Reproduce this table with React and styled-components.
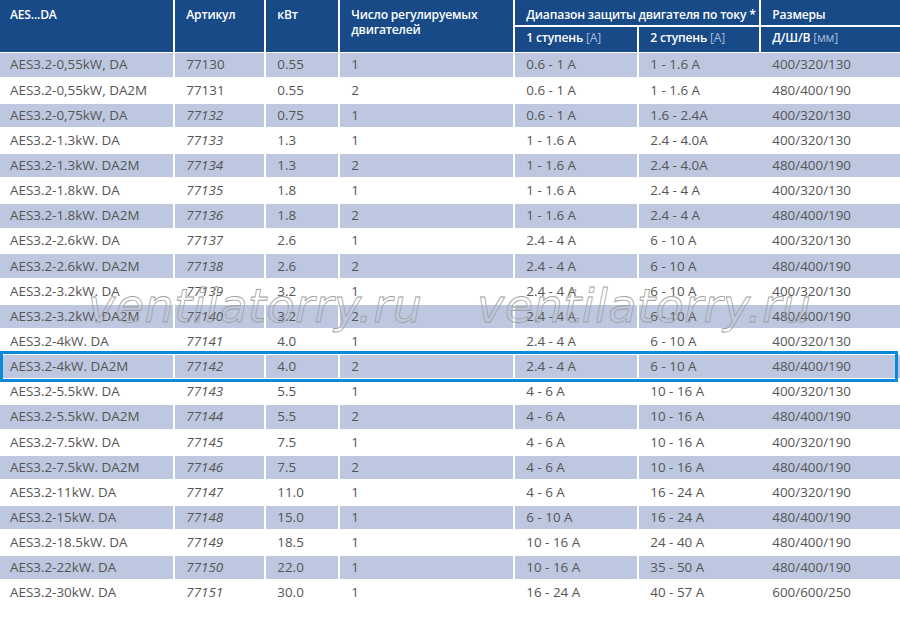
import React from 'react';
import styled, { createGlobalStyle } from 'styled-components';

const rows = [
  ['AES3.2-0,55kW, DA', '77130', '0.55', '1', '0.6 - 1 A', '1 - 1.6 A', '400/320/130'],
  ['AES3.2-0,55kW, DA2M', '77131', '0.55', '2', '0.6 - 1 A', '1 - 1.6 A', '480/400/190'],
  ['AES3.2-0,75kW, DA', '77132', '0.75', '1', '0.6 - 1 A', '1.6 - 2.4A', '400/320/130'],
  ['AES3.2-1.3kW. DA', '77133', '1.3', '1', '1 - 1.6 A', '2.4 - 4.0A', '400/320/130'],
  ['AES3.2-1.3kW. DA2M', '77134', '1.3', '2', '1 - 1.6 A', '2.4 - 4.0A', '480/400/190'],
  ['AES3.2-1.8kW. DA', '77135', '1.8', '1', '1 - 1.6 A', '2.4 - 4 A', '400/320/130'],
  ['AES3.2-1.8kW. DA2M', '77136', '1.8', '2', '1 - 1.6 A', '2.4 - 4 A', '480/400/190'],
  ['AES3.2-2.6kW. DA', '77137', '2.6', '1', '2.4 - 4 A', '6 - 10 A', '400/320/130'],
  ['AES3.2-2.6kW. DA2M', '77138', '2.6', '2', '2.4 - 4 A', '6 - 10 A', '480/400/190'],
  ['AES3.2-3.2kW. DA', '77139', '3.2', '1', '2.4 - 4 A', '6 - 10 A', '400/320/130'],
  ['AES3.2-3.2kW. DA2M', '77140', '3.2', '2', '2.4 - 4 A', '6 - 10 A', '480/400/190'],
  ['AES3.2-4kW. DA', '77141', '4.0', '1', '2.4 - 4 A', '6 - 10 A', '400/320/130'],
  ['AES3.2-4kW. DA2M', '77142', '4.0', '2', '2.4 - 4 A', '6 - 10 A', '480/400/190'],
  ['AES3.2-5.5kW. DA', '77143', '5.5', '1', '4 - 6 A', '10 - 16 A', '400/320/130'],
  ['AES3.2-5.5kW. DA2M', '77144', '5.5', '2', '4 - 6 A', '10 - 16 A', '480/400/190'],
  ['AES3.2-7.5kW. DA', '77145', '7.5', '1', '4 - 6 A', '10 - 16 A', '400/320/190'],
  ['AES3.2-7.5kW. DA2M', '77146', '7.5', '2', '4 - 6 A', '10 - 16 A', '480/400/190'],
  ['AES3.2-11kW. DA', '77147', '11.0', '1', '4 - 6 A', '16 - 24 A', '400/320/190'],
  ['AES3.2-15kW. DA', '77148', '15.0', '1', '6 - 10 A', '16 - 24 A', '480/400/190'],
  ['AES3.2-18.5kW. DA', '77149', '18.5', '1', '10 - 16 A', '24 - 40 A', '480/400/190'],
  ['AES3.2-22kW. DA', '77150', '22.0', '1', '10 - 16 A', '35 - 50 A', '480/400/190'],
  ['AES3.2-30kW. DA', '77151', '30.0', '1', '16 - 24 A', '40 - 57 A', '600/600/250'],
];

const HIGHLIGHT = 12;

function App() {
  return (
    <Page>
      <GlobalStyle />
      <Header>
        <HeadCell $span>AES...DA</HeadCell>
        <HeadCell $span>Артикул</HeadCell>
        <HeadCell $span>кВт</HeadCell>
        <HeadCell $span>Число регулируемых<br />двигателей</HeadCell>
        <HeadCell $wide>Диапазон защиты двигателя по току *</HeadCell>
        <HeadCell>Размеры</HeadCell>
        <HeadCell $sub>1 ступень <Unit>[A]</Unit></HeadCell>
        <HeadCell $sub>2 ступень <Unit>[A]</Unit></HeadCell>
        <HeadCell $sub>Д/Ш/В <Unit>[мм]</Unit></HeadCell>
      </Header>
      <Body>
        {rows.map((r, i) => (
          <Row key={r[1]} $shaded={i % 2 === 0}>
            <Cell>{r[0]}</Cell>
            <Cell $italic={i >= 2}>{r[1]}</Cell>
            <Cell>{r[2]}</Cell>
            <Cell>{r[3]}</Cell>
            <Cell>{r[4]}</Cell>
            <Cell>{r[5]}</Cell>
            <Cell $joined>{r[6]}</Cell>
            {i === HIGHLIGHT && <Frame />}
          </Row>
        ))}
      </Body>
      <Watermark $left={88}>ventilatorry.ru</Watermark>
      <Watermark $left={477}>ventilatorry.ru</Watermark>
    </Page>
  );
}

export default App;

const GlobalStyle = createGlobalStyle`
  body {
    margin: 0;
    background: #fff;
  }
`;

const COLS = '173.3px 91px 74px 175px 124px 122px 1fr';

const Page = styled.div`
  position: relative;
  width: 900px;
  height: 618px;
  overflow: hidden;
  font-family: "Open Sans", "Noto Sans", sans-serif;
`;

const Header = styled.div`
  display: grid;
  grid-template-columns: ${COLS};
  grid-template-rows: 24.5px 25.3px;
  row-gap: 2.2px;
  background: #fff;
`;

const HeadCell = styled.div`
  grid-row: ${p => (p.$span ? 'span 2' : 'auto')};
  grid-column: ${p => (p.$wide ? 'span 2' : 'auto')};
  background: #174a87;
  color: #fff;
  font-size: 12.1px;
  font-weight: 600;
  letter-spacing: -0.2px;
  line-height: 15px;
  padding: ${p => (p.$sub ? '3px' : '7px')} 0 0 11px;
  border-left: 2.3px solid #fff;
  white-space: nowrap;

  &:first-child {
    border-left: none;
    padding-left: 10px;
  }
`;

const Unit = styled.span`
  font-weight: 400;
  color: #a9bcdc;
`;

const Body = styled.div`
  display: flex;
  flex-direction: column;
  gap: 1.75px;
  margin-top: 1.3px;
`;

const Row = styled.div`
  position: relative;
  display: grid;
  grid-template-columns: ${COLS};
  height: 23.4px;
  background: ${p => (p.$shaded ? '#bdc8e0' : '#fff')};
`;

const Frame = styled.div`
  position: absolute;
  z-index: 2;
  top: -3.5px;
  bottom: -3.5px;
  left: 0;
  right: 2px;
  border: 3.5px solid #0a8ad8;
  pointer-events: none;
`;

const Cell = styled.div`
  display: flex;
  align-items: center;
  padding-left: 11px;
  padding-bottom: 1px;
  border-left: 2.3px solid ${p => (p.$joined ? 'transparent' : '#fff')};
  color: #555;
  font-size: 13.4px;
  font-style: ${p => (p.$italic ? 'italic' : 'normal')};
  white-space: nowrap;

  &:first-child {
    border-left: none;
    padding-left: 10px;
  }
`;

const Watermark = styled.div`
  position: absolute;
  z-index: 3;
  top: 283px;
  left: ${p => p.$left}px;
  font-family: "DejaVu Sans", sans-serif;
  font-style: italic;
  font-size: 46px;
  line-height: 1;
  letter-spacing: 0.5px;
  color: transparent;
  -webkit-text-stroke: 0.8px #a0a0a0;
  pointer-events: none;
`;
